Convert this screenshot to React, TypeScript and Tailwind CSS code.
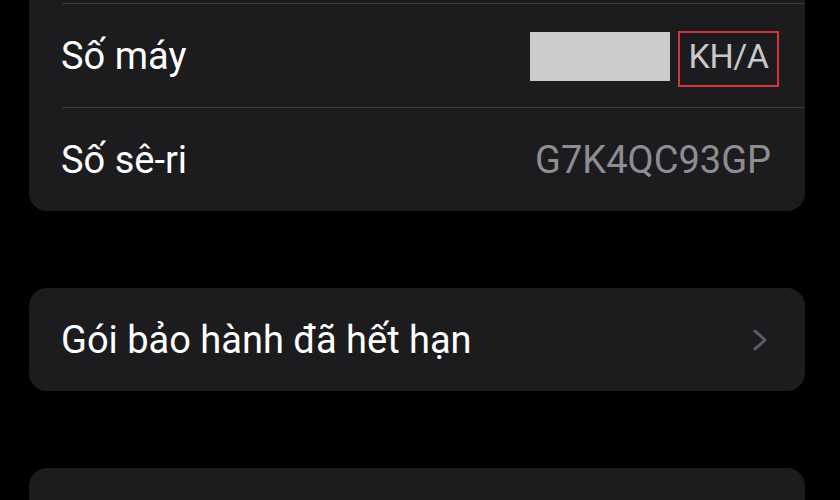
import React from "react";

export default function App() {
  const font = { fontFamily: "Roboto, 'Noto Sans', sans-serif" };
  return (
    <div className="w-[840px] h-[500px] overflow-hidden bg-black" style={font}>
      <div className="ml-[29px] mr-[35px] mt-[-20px] rounded-[18px] bg-[#1c1c1e] overflow-hidden">
        <div className="h-[23px]" />
        <div className="ml-[33px] h-px bg-[#38383a]" />
        <div className="flex items-center h-[103px] pl-[32px] pr-[26px]">
          <span className="text-[38px] text-white leading-none">Số máy</span>
          <div className="ml-auto flex items-center">
            <div className="w-[140px] h-[49px] bg-[#cccbca] mt-[1px]" />
            <div className="ml-[8px] w-[101px] h-[56px] border-2 border-[#d5323b] flex items-center justify-center mt-[7px]">
              <span className="text-[34px] text-[#c8c8c8] leading-none -mt-[6px] tracking-[-0.5px]">KH/A</span>
            </div>
          </div>
        </div>
        <div className="ml-[33px] h-px bg-[#38383a]" />
        <div className="flex items-center h-[103px] pl-[32px] pr-[34px]">
          <span className="text-[38px] text-white leading-none">Số sê-ri</span>
          <span className="ml-auto text-[38px] text-[#8d8d92] leading-none">G7K4QC93GP</span>
        </div>
      </div>
      <div className="ml-[29px] mr-[35px] mt-[77px] h-[103px] rounded-[18px] bg-[#1c1c1e] flex items-center pl-[32px] pr-[37px]">
        <span className="text-[38px] text-white leading-none">Gói bảo hành đã hết hạn</span>
        <svg className="ml-auto" width="16" height="24" viewBox="0 0 16 24" fill="none">
          <path d="M3 3 L13 12 L3 21" stroke="#5b5b60" strokeWidth="3" strokeLinecap="round" strokeLinejoin="round" />
        </svg>
      </div>
      <div className="ml-[29px] mr-[35px] mt-[77px] h-[103px] rounded-[18px] bg-[#1c1c1e]" />
    </div>
  );
}
